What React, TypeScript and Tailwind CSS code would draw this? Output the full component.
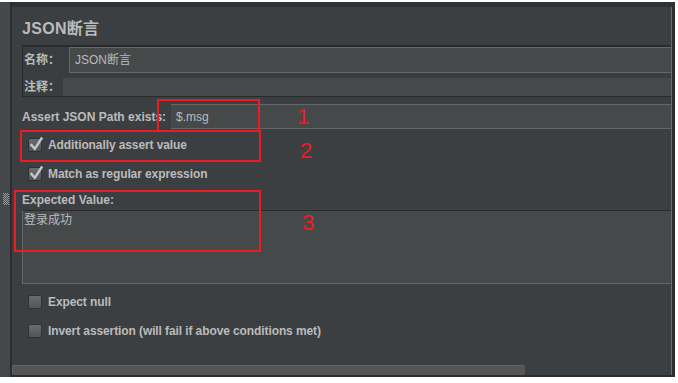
import React from "react";

function CheckBox({ checked }: { checked?: boolean }) {
  return (
    <span className="relative flex h-[14px] w-[14px] shrink-0 items-center justify-center rounded-[2px] border border-[#2f3133] bg-linear-to-b from-[#6a6d6f] to-[#525557]">
      {checked && (
        <svg
          width="14"
          height="14"
          viewBox="0 0 14 14"
          className="absolute left-[0px] top-[-1px] overflow-visible"
        >
          <path
            d="M2.5 7 L5.8 10.8 L12.5 0.5"
            fill="none"
            stroke="#c6c8ca"
            strokeWidth="2.4"
            strokeLinecap="square"
          />
        </svg>
      )}
    </span>
  );
}

function CheckRow({
  label,
  checked,
  className,
}: {
  label: string;
  checked?: boolean;
  className: string;
}) {
  return (
    <div className={`flex items-center gap-[6px] pl-[16px] ${className}`}>
      <CheckBox checked={checked} />
      <span className="font-bold tracking-[-0.1px]">{label}</span>
    </div>
  );
}

function Grip() {
  const dots: [number, number][] = [];
  for (let y = 0; y < 12; y++) {
    for (let x = 0; x < 6; x++) {
      if ((x + y) % 2 === 0) dots.push([x, y]);
    }
  }
  return (
    <svg width="6" height="12" className="absolute left-[3px] top-[191px]">
      {dots.map(([x, y]) => (
        <rect key={`${x}-${y}`} x={x} y={y} width="1" height="1" fill="#9a9d9f" />
      ))}
    </svg>
  );
}

export default function App() {
  return (
    <div className="relative h-[383px] w-[678px] overflow-hidden bg-white font-[Liberation_Sans,Noto_Sans_CJK_SC,sans-serif] text-[12px] text-[#bbbbbb]">
      <div className="mt-[2px] flex h-[375px] w-[675px]">
        {/* left splitter strip */}
        <div className="relative w-[10px] bg-[#45484a]">
          <Grip />
        </div>
        <div className="w-[2px] bg-[#2b2d2f]" />

        {/* main panel */}
        <div className="flex flex-1 flex-col">
          <div className="h-[5px] bg-[#2f3234]" />
          <div className="flex flex-1">
            <div className="flex flex-1 flex-col bg-[#3c3f41]">
              {/* title */}
              <div className="h-[38px] pl-[10px] pt-[12px] text-[16px] font-bold leading-[19px] tracking-[0.3px]">
                JSON断言
              </div>

              {/* name / comment group */}
              <div className="ml-[10px] flex h-[52px] flex-col border-b border-l border-t-2 border-[#2b2b2b] bg-[#3a3d3f]">
                <div className="flex h-[26px]">
                  <div className="flex w-[46px] items-center pl-[1px] font-bold">名称：</div>
                  <div className="flex flex-1 items-center border-y border-l border-[#646769] bg-[#45494a] pl-[5px]">
                    JSON断言
                  </div>
                </div>
                <div className="mt-[5px] flex h-[18px]">
                  <div className="flex w-[40px] items-center pl-[1px] font-bold">注释：</div>
                  <div className="flex-1 bg-[#45494a]" />
                </div>
              </div>

              {/* json path */}
              <div className="ml-[10px] mt-[7px] flex h-[25px]">
                <div className="flex w-[149px] items-center font-bold">Assert JSON Path exists:</div>
                <div className="flex flex-1 items-center border-y border-[#646769] bg-[#45494a] pl-[5px]">
                  $.msg
                </div>
              </div>

              <CheckRow label="Additionally assert value" checked className="h-[32px]" />
              <CheckRow label="Match as regular expression" checked className="h-[26px]" />

              <div className="h-[23px] pl-[10px] pt-[6px] font-bold leading-[15px]">Expected Value:</div>
              <div className="ml-[10px] h-[74px] border-b border-l border-t border-b-[#646769] border-l-[#646769] border-t-[#2b2b2b] bg-[#45494a] pl-[1px] pt-[1px] leading-[16px]">
                登录成功
              </div>

              <CheckRow label="Expect null" className="mt-[9px] h-[18px]" />
              <CheckRow
                label="Invert assertion (will fail if above conditions met)"
                className="mt-[11px] h-[18px]"
              />

              <div className="flex-1" />
              {/* horizontal scrollbar */}
              <div className="h-[10px] w-[513px] rounded-[2px] border-t border-l border-[#626466] bg-[#535557]" />
            </div>
            <div className="w-[1px] bg-[#6a6d6f]" />
            <div className="w-[3px] bg-[#2b2d2f]" />
          </div>
          <div className="h-[2px] bg-[#2b2d2f]" />
        </div>
      </div>

      {/* red annotations */}
      <div className="absolute left-[157px] top-[99px] h-[33px] w-[103px] border-2 border-[#ed1c24]" />
      <div className="absolute left-[20px] top-[130px] h-[32px] w-[241px] border-2 border-[#ed1c24]" />
      <div className="absolute left-[14px] top-[190px] h-[62px] w-[247px] border-2 border-[#ed1c24]" />
      <div className="absolute left-[297px] top-[104px] text-[22px] leading-[25px] text-[#ed1c24]">1</div>
      <div className="absolute left-[300px] top-[138px] text-[22px] leading-[25px] text-[#ed1c24]">2</div>
      <div className="absolute left-[302px] top-[210px] text-[22px] leading-[25px] text-[#ed1c24]">3</div>
    </div>
  );
}
